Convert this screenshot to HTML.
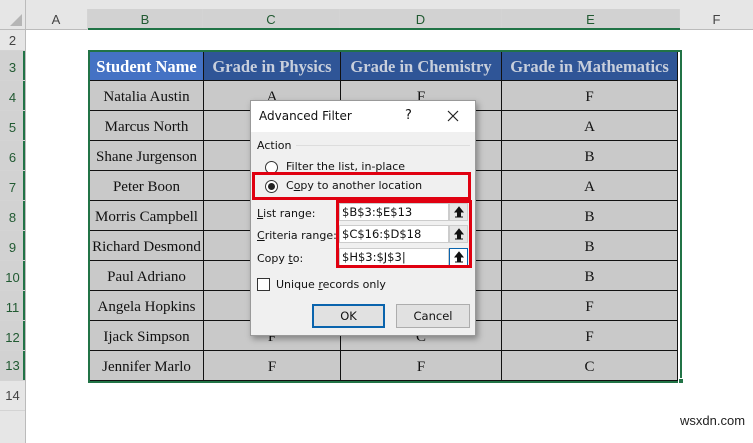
<!DOCTYPE html>
<html><head><meta charset="utf-8"><style>
*{margin:0;padding:0;box-sizing:border-box}
body{width:753px;height:443px;overflow:hidden;background:#fff;position:relative;font-family:"Liberation Sans",sans-serif}
.a{position:absolute}
.ch{position:absolute;top:9px;height:21px;font-size:13px;color:#444;text-align:center;line-height:21px;border-right:1px solid #d4d4d4}
.rh{position:absolute;left:0;width:25px;font-size:13px;color:#444;text-align:center;border-bottom:1px solid #d4d4d4}
.g{position:absolute;display:grid;left:90px;top:52px;grid-template-columns:114px 137px 161px 176px;grid-template-rows:29px repeat(10,30px)}
.g div{font-family:"Liberation Serif",serif;font-size:15px;text-align:center;color:#111;background:#c9c9c9;border-right:1px solid #111;border-bottom:1px solid #111;line-height:32px;white-space:nowrap;overflow:hidden}
.g div.h{background:#2f5597;color:#c8cfdc;font-weight:bold;font-size:16.5px;line-height:30px}
.g div.h1{background:#4472c4;color:#fff}
.dlg{font-family:"DejaVu Sans","Liberation Sans",sans-serif;font-size:11px;color:#111}
.in{position:absolute;left:339px;width:110px;height:18px;background:#fff;border:1px solid #ccc;font-size:11.5px;line-height:16px;padding-left:2px}
.bt{position:absolute;left:449px;width:19px;height:18px;background:#e6e6e6;border:1px solid #ccc}
.bt svg{position:absolute;left:4px;top:2px}
</style></head><body>
<div class="a" style="left:0;top:0;width:753px;height:30px;background:#e6e6e6"></div>
<div class="a" style="left:0;top:0;width:25px;height:443px;background:#e6e6e6"></div>
<div class="a" style="left:10px;top:14px;width:0;height:0;border-left:12px solid transparent;border-bottom:12px solid #b5b5b5"></div>
<div class="a" style="left:0;top:29px;width:753px;height:1px;background:#bbb"></div>
<div class="a" style="left:25px;top:0;width:1px;height:443px;background:#bbb"></div>
<div class="ch" style="left:25px;width:63px">A</div>
<div class="ch" style="left:88px;width:115px;background:#d2d2d2;color:#215a32">B</div>
<div class="ch" style="left:203px;width:137px;background:#d2d2d2;color:#215a32">C</div>
<div class="ch" style="left:340px;width:162px;background:#d2d2d2;color:#215a32">D</div>
<div class="ch" style="left:502px;width:178px;background:#d2d2d2;color:#215a32">E</div>
<div class="ch" style="left:680px;width:73px;border:none">F</div>
<div class="a" style="left:88px;top:28px;width:592px;height:2px;background:#217346"></div>
<div class="rh" style="top:30px;height:21px;line-height:21px">2</div>
<div class="a" style="left:0;top:51px;width:25px;height:330px;background:#d2d2d2"></div>
<div class="a" style="left:23px;top:51px;width:2px;height:330px;background:#217346"></div>
<div class="rh" style="top:51px;height:30px;line-height:34px;color:#215a32">3</div>
<div class="rh" style="top:81px;height:30px;line-height:34px;color:#215a32">4</div>
<div class="rh" style="top:111px;height:30px;line-height:34px;color:#215a32">5</div>
<div class="rh" style="top:141px;height:30px;line-height:34px;color:#215a32">6</div>
<div class="rh" style="top:171px;height:30px;line-height:34px;color:#215a32">7</div>
<div class="rh" style="top:201px;height:30px;line-height:34px;color:#215a32">8</div>
<div class="rh" style="top:231px;height:30px;line-height:34px;color:#215a32">9</div>
<div class="rh" style="top:261px;height:30px;line-height:34px;color:#215a32">10</div>
<div class="rh" style="top:291px;height:30px;line-height:34px;color:#215a32">11</div>
<div class="rh" style="top:321px;height:30px;line-height:34px;color:#215a32">12</div>
<div class="rh" style="top:351px;height:30px;line-height:30px;color:#215a32">13</div>
<div class="rh" style="top:381px;height:30px;line-height:30px">14</div>

<div class="a" style="left:88px;top:50px;width:594px;height:333px;border:2px solid #217346"></div>
<div class="g">
<div class="h h1">Student Name</div><div class="h">Grade in Physics</div><div class="h">Grade in Chemistry</div><div class="h">Grade in Mathematics</div>
<div>Natalia Austin</div><div>A</div><div>F</div><div>F</div>
<div>Marcus North</div><div>B</div><div>A</div><div>A</div>
<div>Shane Jurgenson</div><div>C</div><div>B</div><div>B</div>
<div>Peter Boon</div><div>A</div><div>A</div><div>A</div>
<div>Morris Campbell</div><div>B</div><div>B</div><div>B</div>
<div>Richard Desmond</div><div>A</div><div>B</div><div>B</div>
<div>Paul Adriano</div><div>B</div><div>B</div><div>B</div>
<div>Angela Hopkins</div><div>C</div><div>F</div><div>F</div>
<div>Ijack Simpson</div><div>F</div><div>C</div><div>F</div>
<div>Jennifer Marlo</div><div>F</div><div>F</div><div>C</div>
</div>
<div class="a" style="left:678px;top:378px;width:6px;height:6px;background:#217346;border:1px solid #fff"></div>

<div class="a dlg" style="left:250px;top:100px;width:226px;height:236px;background:#f0f0f0;border:1px solid #999;box-shadow:2px 3px 6px rgba(0,0,0,.35)">
<div class="a" style="left:0;top:0;width:224px;height:31px;background:#fff"></div>
<div class="a" style="left:8px;top:8px;font-size:12px">Advanced Filter</div>
<div class="a" style="left:154px;top:7px;font-size:13px">?</div>
<svg class="a" style="left:196px;top:9px" width="12" height="12"><path d="M1 1L11 11M11 1L1 11" stroke="#222" stroke-width="1.2"/></svg>
<div class="a" style="left:6px;top:38px">Action</div>
<div class="a" style="left:45px;top:44px;width:174px;height:1px;background:#ddd"></div>
<div class="a" style="left:14px;top:60px;width:13px;height:13px;border-radius:50%;border:1px solid #333;background:#fff"></div>
<div class="a" style="left:35px;top:59px">Filter the list, in-place</div>
<div class="a" style="left:14px;top:79px;width:13px;height:13px;border-radius:50%;border:1px solid #333;background:#fff"><div style="margin:2px;width:7px;height:7px;border-radius:50%;background:#222"></div></div>
<div class="a" style="left:35px;top:78px">C<u>o</u>py to another location</div>
<div class="a" style="left:6px;top:106px"><u>L</u>ist range:</div>
<div class="a" style="left:6px;top:128px"><u>C</u>riteria range:</div>
<div class="a" style="left:6px;top:151px">Copy <u>t</u>o:</div>
<div class="a" style="left:6px;top:177px;width:13px;height:13px;border:1px solid #333;background:#fff"></div>
<div class="a" style="left:25px;top:177px">Unique <u>r</u>ecords only</div>
<div class="a" style="left:61px;top:203px;width:73px;height:24px;background:#e1e1e1;border:2px solid #0a64ad;text-align:center;line-height:20px;font-size:11.5px">OK</div>
<div class="a" style="left:145px;top:203px;width:74px;height:24px;background:#e1e1e1;border:1px solid #adadad;text-align:center;line-height:22px;font-size:11.5px">Cancel</div>
</div>
<div class="in dlg" style="top:203px">$B$3:$E$13</div>
<div class="in dlg" style="top:225px">$C$16:$D$18</div>
<div class="in dlg" style="top:248px">$H$3:$J$3|</div>
<div class="bt" style="top:203px"><svg width="10" height="12"><path d="M5 1L1 6H3.5V10H6.5V6H9Z M1 11H9" fill="#111" stroke="#111" stroke-width="1"/></svg></div>
<div class="bt" style="top:225px"><svg width="10" height="12"><path d="M5 1L1 6H3.5V10H6.5V6H9Z M1 11H9" fill="#111" stroke="#111" stroke-width="1"/></svg></div>
<div class="bt" style="top:248px;border-color:#0a64ad;background:#fff"><svg width="10" height="12"><path d="M5 1L1 6H3.5V10H6.5V6H9Z M1 11H9" fill="#111" stroke="#111" stroke-width="1"/></svg></div>
<div class="a" style="left:252px;top:172px;width:219px;height:28px;border:3px solid #e00010"></div>
<div class="a" style="left:336px;top:200px;width:136px;height:68px;border:3px solid #e00010"></div>
<div class="a" style="left:680px;top:413px;font-size:13px;color:#222">wsxdn.com</div>
</body></html>
